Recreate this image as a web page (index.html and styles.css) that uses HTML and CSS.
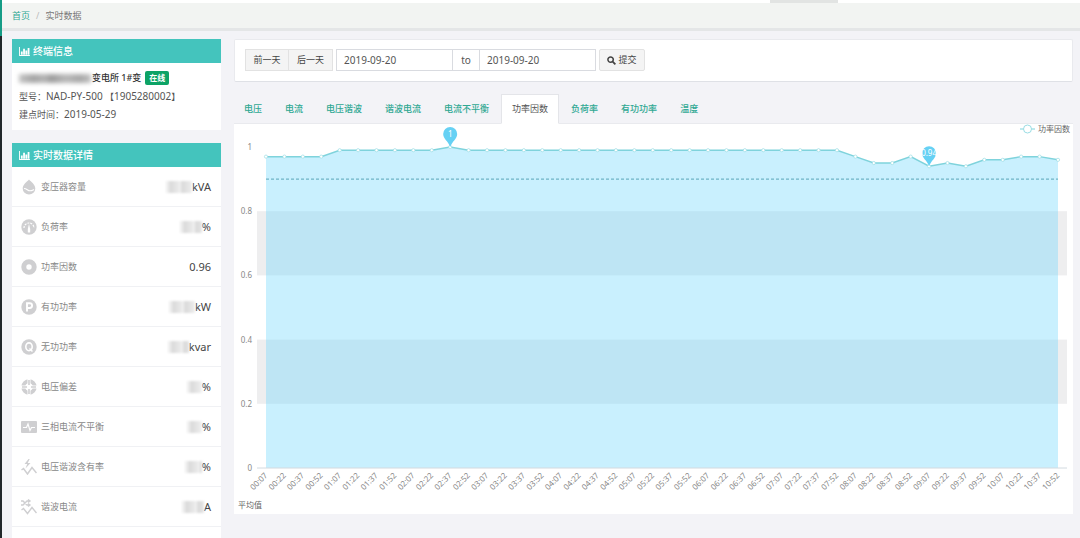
FILE: index.html
```html
<!DOCTYPE html>
<html lang="zh-CN">
<head>
<meta charset="utf-8">
<meta name="viewport" content="width=device-width, initial-scale=1">
<title>实时数据</title>
<link rel="stylesheet" href="styles.css">
</head>
<body>
<svg class="defs" aria-hidden="true">
  <symbol id="i-chart" viewBox="0 0 12 10"><path d="M0 0h1v9h11v1H0zM2 5h2v3.500H2zM4.500 2h2v6.500h-2zM7 4h2v4.500H7zM9.500 1h2v7.500h-2z" fill="currentColor"/></symbol>
</svg>
<div class="app">
  <aside class="rail"></aside>
  <div class="page">
    <div class="topbar"><span class="topbar-tab"></span></div>
    <nav class="breadcrumb" aria-label="breadcrumb"><a href="#">首页</a><span class="sep">/</span><span>实时数据</span></nav>
    <main class="content">
      <div class="side">
        <section class="card">
          <h2 class="card-title"><svg class="title-icon"><use href="#i-chart"/></svg>终端信息</h2>
          <div class="terminal">
            <p class="terminal-name"><span class="masked-name"></span>变电所 1#变<span class="badge">在线</span></p>
            <p>型号：<span class="latin">NAD-PY-500</span> 【<span class="latin">1905280002</span>】</p>
            <p>建点时间：<span class="latin">2019-05-29</span></p>
          </div>
        </section>
        <section class="card card-grow">
          <h2 class="card-title"><svg class="title-icon"><use href="#i-chart"/></svg>实时数据详情</h2>
          <ul class="metrics">
            <li><svg class="icon" viewBox="0 0 16 16"><path d="M8 .5c2 2.300 6.300 5 6.300 9a6.300 6 0 0 1-12.600 0C1.700 5.500 6 2.800 8 .5z" fill="#cfcfd1"/><path d="M3 9.500c3 0 3.500 2.300 6 2.300 1.800 0 2.500-.6 4-1.300" fill="none" stroke="#fff" stroke-width="1.100"/></svg><span>变压器容量</span><b><i class="mask m-26"></i>kVA</b></li>
            <li><svg class="icon" viewBox="0 0 16 16"><circle cx="8" cy="8" r="7.700" fill="#cfcfd1"/><path d="M3 9a5 5 0 0 1 10 0" fill="none" stroke="#fff" stroke-width="1.200" stroke-dasharray="2 1"/><path d="M8 5l1.200 5v3.500H6.800V10z" fill="#fff"/></svg><span>负荷率</span><b><i class="mask m-22"></i>%</b></li>
            <li><svg class="icon" viewBox="0 0 16 16"><circle cx="8" cy="8" r="5.200" fill="none" stroke="#cfcfd1" stroke-width="5"/></svg><span>功率因数</span><b>0.96</b></li>
            <li><svg class="icon" viewBox="0 0 16 16"><circle cx="8" cy="8" r="7.700" fill="#cfcfd1"/><path d="M6 12.500V4.200h2.700a2.300 2.300 0 0 1 0 4.800H6" fill="none" stroke="#fff" stroke-width="1.900"/></svg><span>有功功率</span><b><i class="mask m-26"></i>kW</b></li>
            <li><svg class="icon" viewBox="0 0 16 16"><circle cx="8" cy="8" r="7.700" fill="#cfcfd1"/><ellipse cx="8" cy="7.800" rx="3.200" ry="3.900" fill="none" stroke="#fff" stroke-width="1.600"/><path d="M8.500 9.500l3 3" stroke="#fff" stroke-width="1.500"/></svg><span>无功功率</span><b><i class="mask m-21"></i>kvar</b></li>
            <li><svg class="icon" viewBox="0 0 16 16"><circle cx="8" cy="8" r="5.700" fill="none" stroke="#cfcfd1" stroke-width="4"/><path d="M8 0v16M0 8h16" stroke="#fff" stroke-width="3"/><path d="M8 1v5M8 10v5M1 8h5M10 8h5" stroke="#cfcfd1" stroke-width="1.600"/></svg><span>电压偏差</span><b><i class="mask m-15"></i>%</b></li>
            <li><svg class="icon" viewBox="0 0 16 16"><rect y="2" width="16" height="12" rx="1" fill="#cfcfd1"/><path d="M2 8.500h3.500L7 5l2 6.500 1.500-3H14" fill="none" stroke="#fff" stroke-width="1.200"/></svg><span>三相电流不平衡</span><b><i class="mask m-15"></i>%</b></li>
            <li><svg class="icon" viewBox="0 0 16 16"><path d="M.5 11l2-1.500 4 5.500L11 8.500l4.500 5.500" fill="none" stroke="#cfcfd1" stroke-width="1.500"/><path d="M7.500 0L3.500 5h2.700L4.500 9.500 9.500 4H6.700l2-4z" fill="#cfcfd1"/></svg><span>电压谐波含有率</span><b><i class="mask m-17"></i>%</b></li>
            <li><svg class="icon" viewBox="0 0 16 16"><path d="M.5 11l2-1.500 4 5L11 8.500l4.500 5.500M0 2h2l4 4h2.500M0 6h2l4-4h2.500M7 .5L9 2 7 3.500M7 4.500L9 6 7 7.500" fill="none" stroke="#cfcfd1" stroke-width="1.400"/></svg><span>谐波电流</span><b><i class="mask m-22"></i>A</b></li>
          </ul>
        </section>
      </div>
      <div class="main">
        <form class="filter">
          <div class="btn-group"><button class="btn" type="button">前一天</button><button class="btn" type="button">后一天</button></div>
          <div class="range"><input type="text" aria-label="开始日期" value="2019-09-20"><span class="to">to</span><input type="text" aria-label="结束日期" value="2019-09-20"></div>
          <button class="btn submit" type="button"><svg class="search" viewBox="0 0 10 10"><circle cx="4" cy="4" r="3" fill="none" stroke="currentColor" stroke-width="1.700"/><path d="M6 6l3.300 3.300" stroke="currentColor" stroke-width="1.900"/></svg>提交</button>
        </form>
        <nav class="tabs">
          <a href="#">电压</a><a href="#">电流</a><a href="#">电压谐波</a><a href="#">谐波电流</a><a href="#">电流不平衡</a><a href="#" class="active" aria-current="page">功率因数</a><a href="#">负荷率</a><a href="#">有功功率</a><a href="#">温度</a>
        </nav>
        <section class="chart-card">
          <svg id="chart" class="chart" viewBox="0 0 839 391" role="img" aria-label="功率因数"></svg>
        </section>
      </div>
    </main>
  </div>
</div>
<script src="chart.js"></script>
</body>
</html>
```
FILE: styles.css
```css
* { box-sizing: border-box; }
body {
  margin: 0;
  background: #f3f3f7;
  color: #555;
  font: 10px/18px "Noto Sans", "Noto Sans CJK SC", sans-serif;
}
h2, p, ul { margin: 0; padding: 0; }
a { color: #2fa893; text-decoration: none; }
.defs { position: absolute; width: 0; height: 0; }
.app { display: flex; min-height: 100vh; }
.rail { flex: none; width: 2px; background: linear-gradient(#159c86 36px, #22282b 36px); }
.page { flex: 1; min-width: 0; display: flex; flex-direction: column; }
.topbar { height: 3px; background: #fff; display: flex; justify-content: flex-end; padding-right: 242px; }
.topbar-tab { width: 68px; background: #e2e4e3; }
.breadcrumb {
  display: flex;
  align-items: center;
  height: 28px;
  padding: 0 10px;
  background: #f2f4f2;
  border-bottom: 3px solid #e4e6e7;
  font-size: 9px;
  color: #777;
}
.sep { padding: 0 6px; color: #bbb; }
.content { flex: 1; display: flex; gap: 13px; padding: 8px 7px 0 10px; }
.side { flex: none; width: 209px; display: flex; flex-direction: column; gap: 13px; }
.main { flex: 1; min-width: 0; }
.card { background: #fff; }
.card-grow { flex: 1; }
.card-title {
  display: flex;
  align-items: center;
  gap: 3px;
  height: 24px;
  padding: 0 7px;
  background: #44c4bd;
  color: #fff;
  font-size: 10px;
  font-weight: 500;
}
.title-icon { width: 11px; height: 9px; }
.terminal { padding: 6px 7px 7px; font-size: 9px; white-space: nowrap; }
.terminal p { height: 18px; }
.latin { font-size: 10px; }
.terminal-name { display: flex; align-items: center; color: #333; font-weight: 500; }
.masked-name {
  width: 72px;
  height: 9px;
  margin-right: 1px;
  background: linear-gradient(90deg, #c4c4c4, #a4a4a4 20%, #b4b4b4 35%, #9c9c9c 45%, #b8b8b8 65%, #a8a8a8 85%, #c0c0c0);
  filter: blur(2px);
}
.badge {
  margin-left: 4px;
  padding: 0 4px;
  border-radius: 2px;
  background: #0da366;
  color: #fff;
  font-size: 8px;
  font-weight: 700;
  line-height: 14px;
}
.metrics { list-style: none; }
.metrics li {
  display: flex;
  align-items: center;
  height: 40px;
  padding: 0 10px 0 9px;
  border-bottom: 1px solid #f0f1f4;
  font-size: 9px;
  color: #888;
}
.icon { width: 16px; height: 16px; margin-right: 4px; }
.metrics b { display: flex; align-items: center; margin-left: auto; color: #444; font-size: 11px; font-weight: 400; }
.mask { height: 12px; background: repeating-linear-gradient(90deg, #eee 0 3px, #ddd 3px 8px, #e5e5e5 8px 12px); filter: blur(1px); }
.m-15 { width: 15px; }
.m-17 { width: 17px; }
.m-21 { width: 21px; }
.m-22 { width: 22px; }
.m-26 { width: 26px; }
.filter {
  display: flex;
  gap: 3px;
  padding: 9px 10px 10px;
  background: #fff;
  border: 1px solid #e9eaee;
  border-bottom-color: #dfe1e6;
  border-radius: 2px;
}
.btn-group, .range { display: flex; }
.btn {
  width: 44px;
  height: 22px;
  padding: 0;
  border: 1px solid #e2e2e2;
  background: #f4f4f4;
  color: #444;
  font: inherit;
  font-size: 9px;
  line-height: 20px;
}
.btn + .btn { width: 45px; margin-left: -1px; }
.submit { display: flex; align-items: center; justify-content: center; gap: 2px; width: 46px; border-radius: 2px; }
.search { width: 9px; height: 9px; }
.range input {
  width: 117px;
  height: 22px;
  padding: 0 7px;
  border: 1px solid #d9dbe0;
  background: #fff;
  color: #555;
  font: inherit;
}
.to { width: 26px; border: solid #d9dbe0; border-width: 1px 0; line-height: 20px; text-align: center; }
.tabs { display: flex; margin: 12px 0 0 -1px; }
.tabs a {
  height: 29px;
  margin: 0 1px -1px 0;
  padding: 0 10px;
  border: 1px solid transparent;
  font-size: 9px;
  font-weight: 500;
  line-height: 27px;
  white-space: nowrap;
}
.tabs .active { position: relative; height: 30px; background: #fff; border-color: #e4e5e9; border-bottom-color: #fff; color: #555; font-weight: 400; }
.chart-card { background: #fff; box-shadow: inset 0 1px #e9eaee; }
.chart { display: block; width: 100%; height: auto; }
.chart .axis { font-size: 8px; fill: #888; }
.chart .pin { font-size: 8px; fill: #fff; }
.chart .caption { font-size: 8px; fill: #666; }
```
FILE: chart.js
```js
const svg = document.getElementById("chart");
const NS = "http://www.w3.org/2000/svg";
const add = (tag, attrs, text) => {
  const el = document.createElementNS(NS, tag);
  for (const key in attrs) el.setAttribute(key, attrs[key]);
  if (text !== undefined) el.textContent = text;
  svg.appendChild(el);
};

const values = [
  ...Array(4).fill(0.97), ...Array(6).fill(0.99), 1, ...Array(21).fill(0.99),
  0.97, 0.95, 0.95, 0.97, 0.94, 0.95, 0.94, 0.96, 0.96, 0.97, 0.97, 0.96
];
const base = 345;
const first = 32;
const last = 824;
const x = i => first + (last - first) * i / (values.length - 1);
const y = v => base - 321 * v;

[0.8, 0.4].forEach(v => add("rect", { x: 23, y: y(v), width: 810, height: y(0) - y(0.2), fill: "#eeeeef" }));
const line = values.map((v, i) => `${x(i)},${y(v)}`).join(" ");
add("polygon", { points: `${first},${base} ${line} ${last},${base}`, fill: "#70d7fd", "fill-opacity": 0.38 });
add("path", { d: `M23 ${base}H833`, stroke: "#d2dae0" });
add("path", { d: `M${first} ${y(0.9)}H${last}`, stroke: "#6fb4c6", "stroke-width": 1.3, "stroke-dasharray": "3 2" });
add("polyline", { points: line, fill: "none", stroke: "#7fd3dc", "stroke-width": 1.5 });
values.forEach((v, i) => add("circle", { cx: x(i), cy: y(v), r: 1.6, fill: "#fff", stroke: "#9adde4", "stroke-width": 0.7 }));

[0, 0.2, 0.4, 0.6, 0.8, 1].forEach(v => add("text", { class: "axis", x: 18, y: y(v) + 3, "text-anchor": "end" }, v));
values.forEach((v, i) => {
  const minutes = 7 + 15 * i;
  const label = [Math.floor(minutes / 60), minutes % 60].map(n => String(n).padStart(2, "0")).join(":");
  add("text", { class: "axis", "text-anchor": "end", transform: `translate(${x(i) + 2} ${base + 8}) rotate(-45)` }, label);
});

[[10, "1"], [36, "0.94"]].forEach(([i, label]) => {
  const px = x(i), py = y(values[i]);
  add("path", { d: `M${px} ${py}C${px - 2} ${py - 6} ${px - 7} ${py - 8} ${px - 7} ${py - 13}a7 7 0 0 1 14 0C${px + 7} ${py - 8} ${px + 2} ${py - 6} ${px} ${py}z`, fill: "#66d1f4" });
  add("text", { class: "pin", x: px, y: py - 10, "text-anchor": "middle" }, label);
});

add("path", { d: "M786 6H801", stroke: "#7fd3dc" });
add("circle", { cx: 793.5, cy: 6, r: 4, fill: "#fff", stroke: "#9adde4" });
add("text", { class: "caption", x: 804, y: 9 }, "功率因数");
add("text", { class: "caption", x: 4, y: 385 }, "平均值");
```
